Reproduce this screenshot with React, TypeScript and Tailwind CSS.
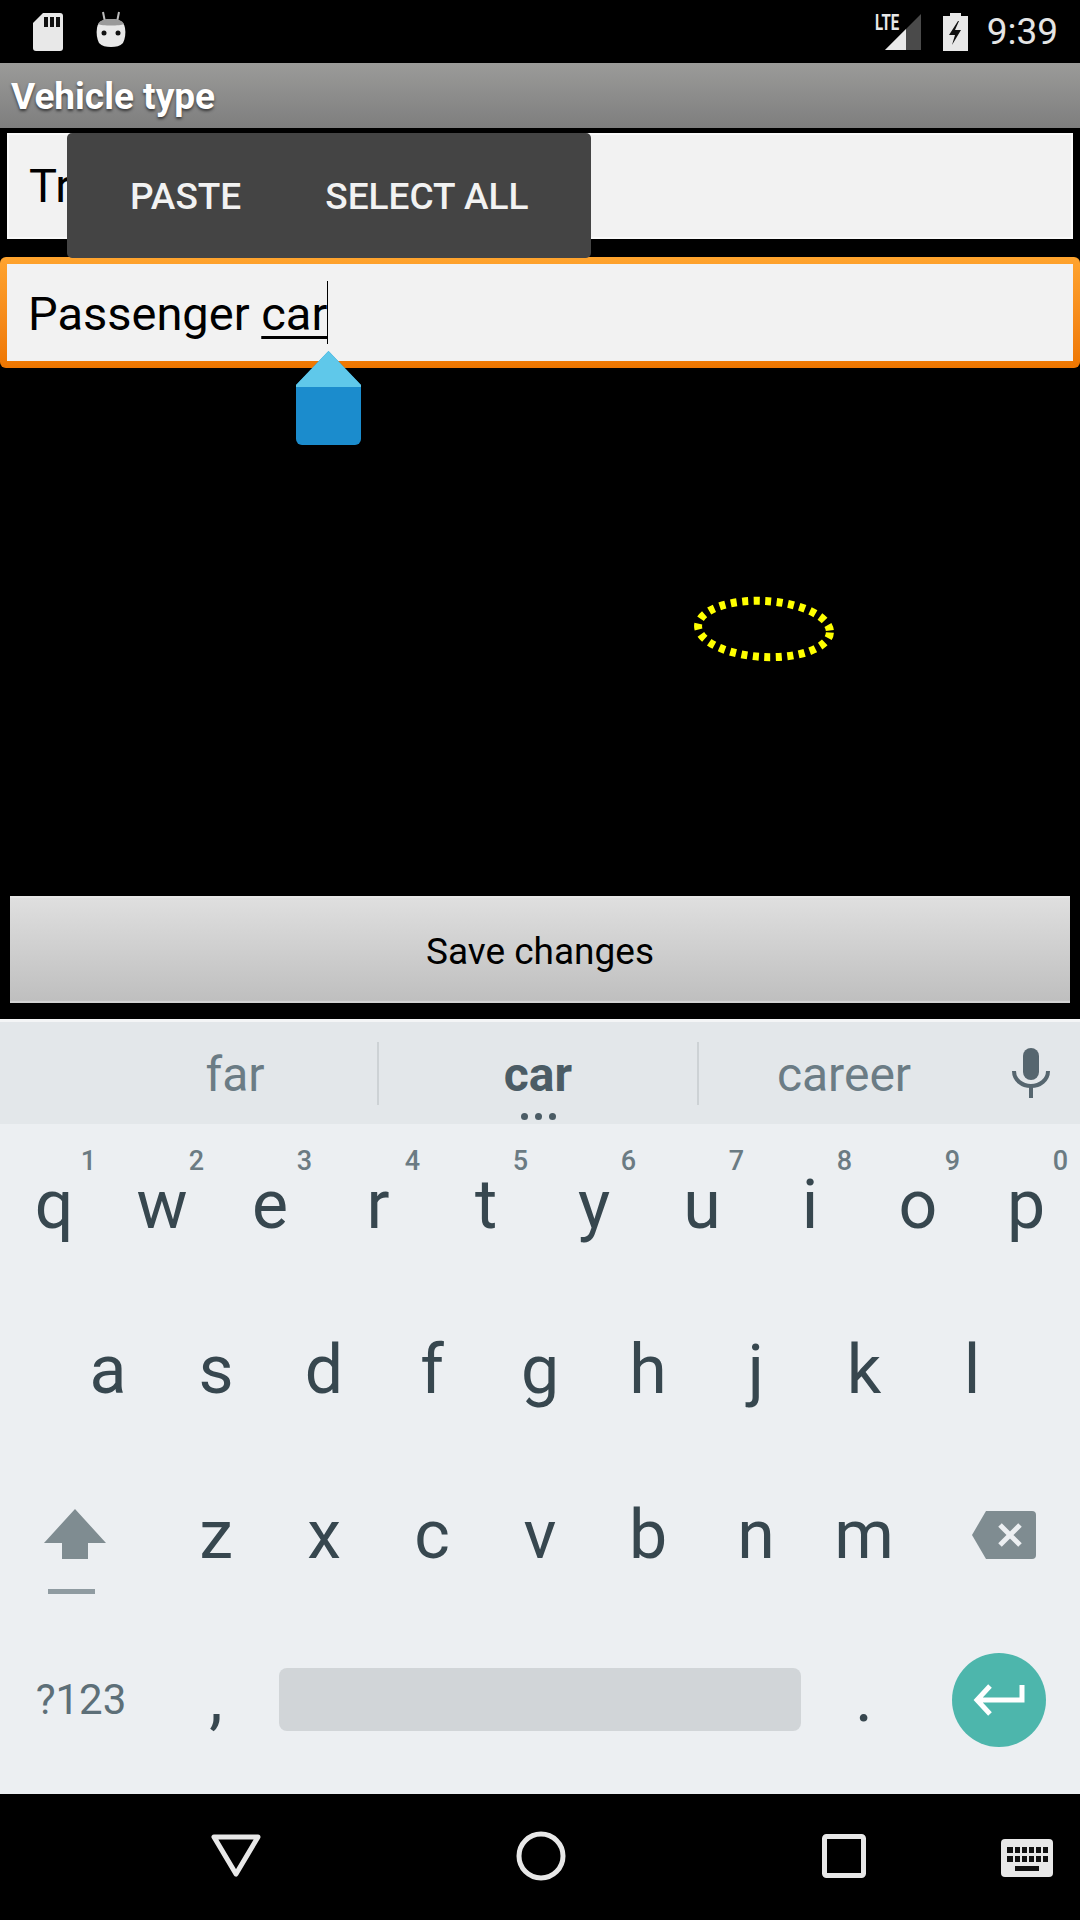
const rows = [
  ["q", "w", "e", "r", "t", "y", "u", "i", "o", "p"],
  ["a", "s", "d", "f", "g", "h", "j", "k", "l"],
  ["z", "x", "c", "v", "b", "n", "m"],
];
const hints = ["1", "2", "3", "4", "5", "6", "7", "8", "9", "0"];

function Key({ label, hint }: { label: string; hint?: string }) {
  return (
    <div className="relative flex h-[165px] w-[108px] items-center justify-center pb-[3px] text-[68px] leading-none text-[#37474f]">
      {label}
      {hint && <span className="absolute right-[12px] top-[21px] text-[27px] leading-8 font-medium text-[#6b7b83]">{hint}</span>}
    </div>
  );
}

function StatusBar() {
  return (
    <div className="flex h-[63px] items-center justify-between pl-[33px] pr-[22px]">
      <div className="flex items-center gap-[33px]">
        <svg width="30" height="38" viewBox="0 0 30 38">
          <path d="M10 0H27a3 3 0 0 1 3 3V35a3 3 0 0 1-3 3H3a3 3 0 0 1-3-3V10Z" fill="#e8e8e8" />
          <path d="M11 4h4v10h-4zM17 4h4v10h-4zM23 4h4v10h-4z" fill="#111" />
        </svg>
        <svg className="mb-[6px]" width="30" height="36" viewBox="0 0 30 36">
          <path d="M7 1l2 10M23 1l-2 10" stroke="#bdbdbd" strokeWidth="2" fill="none" />
          <path d="M1 17C2 10 8 8 15 8s13 2 14 9c1 5 0 11-2 15-3 3-7 4-12 4s-9-1-12-4c-2-4-3-10-2-15Z" fill="#e8e8e8" />
          <path d="M2 13C4 9 9 8 15 8s11 1 13 5c-4 2-22 2-26 0Z" fill="#9a9a9a" />
          <circle cx="8" cy="22" r="2.5" fill="#111" />
          <circle cx="22" cy="22" r="2.5" fill="#111" />
        </svg>
      </div>
      <div className="flex items-center">
        <div className="relative h-[38px] w-[46px]">
          <span className="absolute left-0 top-[-2px] origin-left scale-x-[0.68] text-[22px] leading-6 font-bold text-[#e8e8e8]">LTE</span>
          <svg className="absolute left-0 top-0" width="46" height="38" viewBox="0 0 46 38">
            <path d="M10 37L46 1V37Z" fill="#4a4a4a" />
            <path d="M10 37L31 16V37Z" fill="#e8e8e8" />
          </svg>
        </div>
        <svg className="ml-[22px]" width="25" height="38" viewBox="0 0 25 38">
          <path d="M7 0h11v3h7v35H0V3h7Z" fill="#e8e8e8" />
          <path d="M15 8L6 22h6l-3 10 9-15h-6l4-9Z" fill="#111" />
        </svg>
        <span className="ml-[19px] text-[37px] leading-none text-[#e4e4e4]">9:39</span>
      </div>
    </div>
  );
}

function SuggestionBar() {
  return (
    <div className="relative flex h-[102px] items-center bg-[#e3e7ea] pl-[93px] text-[48px] text-[#6b7c85]">
      <div className="flex h-[63px] w-[286px] items-center justify-center border-r-2 border-[#cdd2d5] pt-[4px]">far</div>
      <div className="flex h-[63px] w-[320px] items-center justify-center border-r-2 border-[#cdd2d5] pt-[4px] font-bold text-[#4b5c65]">car</div>
      <div className="flex h-[63px] w-[290px] items-center justify-center pt-[4px]">career</div>
      <svg className="ml-[23px]" width="38" height="50" viewBox="0 0 38 50">
        <rect x="11" y="0" width="16" height="32" rx="8" fill="#56666f" />
        <path d="M2 23c0 9 8 15 17 15s17-6 17-15" stroke="#56666f" strokeWidth="4" fill="none" />
        <rect x="17" y="37" width="4" height="13" fill="#56666f" />
      </svg>
      <div className="absolute bottom-[4px] left-[521px] flex gap-[7px]">
        <div className="size-[7px] rounded-full bg-[#4b5c65]" />
        <div className="size-[7px] rounded-full bg-[#4b5c65]" />
        <div className="size-[7px] rounded-full bg-[#4b5c65]" />
      </div>
    </div>
  );
}

function Keyboard() {
  return (
    <div className="flex h-[775px] flex-col bg-[#eceff2] font-[Roboto,sans-serif]">
      <div className="h-[3px] shrink-0 bg-[#f4f5f6]" />
      <SuggestionBar />
      <div className="flex">
        {rows[0].map((k, i) => <Key key={k} label={k} hint={hints[i]} />)}
      </div>
      <div className="flex pl-[54px]">
        {rows[1].map((k) => <Key key={k} label={k} />)}
      </div>
      <div className="flex h-[165px] items-center">
        <div className="flex w-[150px] justify-center pt-[30px]">
          <svg width="64" height="86" viewBox="0 0 64 86">
            <path d="M32 0L63 34H45V50H19V34H1Z" fill="#7f8c91" />
            <rect x="5" y="80" width="47" height="5" fill="#8f9ba1" />
          </svg>
        </div>
        <div className="flex pl-[12px]">
          {rows[2].map((k) => <Key key={k} label={k} />)}
        </div>
        <div className="flex flex-1 justify-center pb-[4px] pl-[10px]">
          <svg width="64" height="48" viewBox="0 0 64 48">
            <path d="M14 0H60a4 4 0 0 1 4 4V44a4 4 0 0 1-4 4H14L0 24Z" fill="#7f8c91" />
            <path d="M28 14L48 34M48 14L28 34" stroke="#eceff2" strokeWidth="5" />
          </svg>
        </div>
      </div>
      <div className="flex h-[165px] items-center pb-[4px]">
        <div className="flex w-[162px] justify-center text-[42px] text-[#5d6f78]">?123</div>
        <Key label="," />
        <div className="mx-[9px] h-[63px] w-[522px] rounded-[8px] bg-[#d1d5d8]" />
        <Key label="." />
        <div className="ml-[34px] flex size-[94px] items-center justify-center rounded-full bg-[#4db6ac]">
          <svg width="52" height="34" viewBox="0 0 52 34">
            <path d="M49 2V17H5M17 3L4 17l13 14" stroke="#fff" strokeWidth="5" fill="none" />
          </svg>
        </div>
      </div>
    </div>
  );
}

function NavBar() {
  return (
    <div className="relative flex h-[126px] items-center justify-center gap-[255px] pb-[2px] pr-[3px]">
      <svg width="50" height="44" viewBox="0 0 50 44">
        <path d="M3 3H47L25 40Z" stroke="#e8e8e8" strokeWidth="5" strokeLinejoin="round" fill="none" />
      </svg>
      <svg width="50" height="50" viewBox="0 0 50 50">
        <circle cx="25" cy="25" r="22" stroke="#e8e8e8" strokeWidth="5" fill="none" />
      </svg>
      <svg className="ml-[1px]" width="44" height="44" viewBox="0 0 44 44">
        <rect x="2.5" y="2.5" width="39" height="39" rx="2" stroke="#e8e8e8" strokeWidth="5" fill="none" />
      </svg>
      <svg className="absolute left-[1001px] top-[45px]" width="52" height="38" viewBox="0 0 52 38">
        <rect width="52" height="38" rx="4" fill="#e8e8e8" />
        <path d="M6 8h6v6H6zM14 8h5v6h-5zM21 8h5v6h-5zM28 8h5v6h-5zM35 8h5v6h-5zM42 8h5v6h-5zM6 17h6v6H6zM14 17h5v6h-5zM21 17h5v6h-5zM28 17h5v6h-5zM35 17h5v6h-5zM42 17h5v6h-5zM14 27h24v5H14z" fill="#111" />
      </svg>
    </div>
  );
}

export default function App() {
  return (
    <div className="relative flex h-[1920px] w-[1080px] flex-col overflow-hidden bg-black font-[Roboto,sans-serif]">
      <StatusBar />
      <div className="flex h-[65px] items-center bg-gradient-to-b from-[#9b9b99] to-[#7e7e7e] pl-[11px] pt-[2px] text-[37px] font-bold text-white [text-shadow:0_2px_3px_rgba(0,0,0,0.6)]">
        Vehicle type
      </div>

      <div className="mx-[7px] mt-[5px] flex h-[106px] items-center border-2 border-[#fafafa] bg-[#f2f2f2] pl-[20px] text-[47px] text-black">
        Tr
      </div>

      <div className="mt-[18px] h-[111px] rounded-[6px] bg-gradient-to-b from-[#ffa42e] to-[#ee7600] p-[7px]">
        <div className="flex h-full items-center bg-[#f2f2f2] pl-[21px] text-[47px] text-black">
          <span className="pt-[3px]">Passenger <span className="underline decoration-[3px] underline-offset-[6px]">car</span></span>
          <div className="h-[63px] w-px bg-black" />
        </div>
      </div>

      <div className="flex-1" />

      <div className="mx-[10px] mb-[16px] flex h-[107px] items-center justify-center border-y-2 border-t-[#e6e6e6] border-b-[#d2d2d2] bg-gradient-to-b from-[#dfdfdf] to-[#bfbfbf] pt-[4px] text-[37px] text-black">
        Save changes
      </div>

      <Keyboard />
      <NavBar />

      {/* text selection popup */}
      <div className="absolute left-[67px] top-[133px] flex h-[125px] items-center gap-[84px] rounded-[5px] bg-[#444444] px-[63px] pt-[3px] text-[37px] font-medium text-[#f2f2f2]">
        <span>PASTE</span>
        <span>SELECT ALL</span>
      </div>

      {/* cursor handle */}
      <svg className="absolute left-[296px] top-[351px]" width="65" height="94" viewBox="0 0 65 94">
        <path d="M32.5 0L65 34V88a6 6 0 0 1-6 6H6a6 6 0 0 1-6-6V34Z" fill="#1b8ccd" />
        <path d="M32.5 0L65 34V36H0V34Z" fill="#5fc8ea" />
      </svg>

      {/* dotted ellipse drawn on the canvas */}
      <svg className="absolute left-[690px] top-[591px]" width="150" height="76" viewBox="0 0 150 76">
        <ellipse cx="74" cy="38" rx="66" ry="28" transform="rotate(3 74 38)" stroke="#ffff00" strokeWidth="8" strokeDasharray="6 5.5" fill="none" />
      </svg>
    </div>
  );
}
